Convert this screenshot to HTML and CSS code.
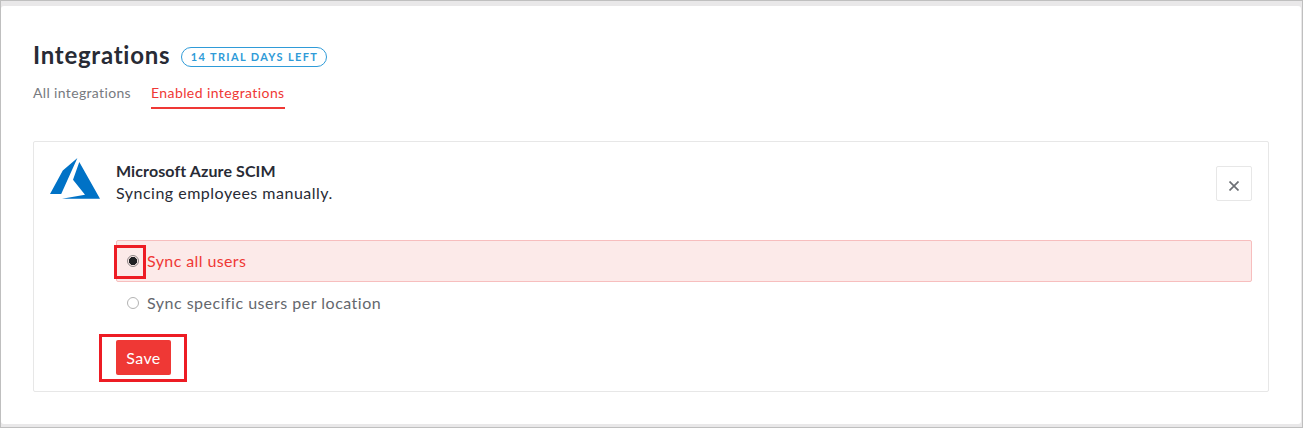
FILE: index.html
```html
<!DOCTYPE html>
<html lang="en">
<head>
<meta charset="utf-8">
<title>Integrations</title>
<link rel="stylesheet" href="styles.css">
</head>
<body>
<main class="panel">
  <header class="heading">
    <h1 class="title">Integrations</h1>
    <span class="trial">14 TRIAL DAYS LEFT</span>
  </header>
  <nav class="tabs">
    <a class="tab tab-all">All integrations</a>
    <a class="tab tab-active">Enabled integrations</a>
  </nav>
  <section class="card">
    <svg class="logo" width="50" height="42" viewBox="0 0 50 42"><path fill="#0072c6" d="M27.4 0 12.8 12.6 0 36h11.2zM29.3 4 23 21.7 35 36.8 12 40.8h38z"/></svg>
    <div class="content">
      <div class="top">
        <div class="intro">
          <h2 class="name">Microsoft Azure SCIM</h2>
          <p class="status">Syncing employees manually.</p>
        </div>
        <button class="close" aria-label="Close"><svg width="10" height="10" viewBox="0 0 10 10"><path d="M.5.5l9 9M9.5.5l-9 9" stroke="#6d7075" stroke-width="1.7"/></svg></button>
      </div>
      <label class="option selected"><span class="mark"><span class="radio checked"></span></span><span class="label-all">Sync all users</span></label>
      <label class="option"><span class="mark"><span class="radio"></span></span><span class="label-location">Sync specific users per location</span></label>
      <div class="actions"><button class="save">Save</button></div>
    </div>
  </section>
</main>
</body>
</html>
```
FILE: styles.css
```css
* { box-sizing: border-box; }
body {
  margin: 0;
  height: 428px;
  padding: 5px 1px 3px 0;
  border: 1px solid #bfbfbf;
  background: #e9e8e9;
  color: #282b35;
  font-family: Lato, sans-serif;
  overflow: hidden;
}
h1, h2, p { margin: 0; }
button { font: inherit; padding: 0; }
.panel { height: 418px; padding: 36px 32px 0; background: #fff; border-radius: 3px; }
.heading { display: flex; height: 26px; align-items: flex-start; }
.title { width: 148px; font-size: 24px; line-height: 26px; font-weight: 700; letter-spacing: .75px; white-space: nowrap; }
.trial {
  width: 146px;
  height: 20px;
  margin-top: 5px;
  padding-left: 1px;
  border: 1px solid #2f9bd8;
  border-radius: 10px;
  color: #2f9bd8;
  font-size: 11px;
  line-height: 18px;
  font-weight: 700;
  letter-spacing: 1.35px;
  text-align: center;
  white-space: nowrap;
}
.tabs { display: flex; gap: 20px; height: 41px; margin-top: 15px; }
.tab { height: 26px; font-size: 14px; line-height: 20px; color: #777a80; white-space: nowrap; }
.tab-all { width: 98px; letter-spacing: .35px; }
.tab-active { width: 134px; color: #ef3835; border-bottom: 2px solid #ef3835; letter-spacing: .41px; }
.card { display: flex; gap: 16px; width: 1236px; height: 251px; margin-top: 17px; padding: 16px; border: 1px solid #e7e7e7; border-radius: 2px; }
.logo { flex: none; }
.content { width: 1136px; padding-top: 8px; }
.top { display: flex; justify-content: space-between; height: 74px; }
.name { margin-top: -6px; font-size: 16px; line-height: 22px; font-weight: 700; letter-spacing: .1px; }
.status { font-size: 16px; line-height: 22px; letter-spacing: .5px; }
.close { display: flex; align-items: center; justify-content: center; width: 36px; height: 35px; padding-top: 4px; border: 1px solid #e7e7e7; border-radius: 2px; background: #fff; }
.option { display: flex; align-items: center; height: 42px; border: 1px solid transparent; border-radius: 2px; color: #64676d; font-size: 16px; }
.selected { border-color: #f7bebe; background: #fceae9; color: #ef3835; }
.mark { display: flex; align-items: center; justify-content: center; width: 32px; height: 34px; margin: 2px 1px 0 -3px; border: 3px solid transparent; }
.selected .mark { border-color: #ed1c24; }
.radio { width: 12px; height: 12px; margin: -2px 0 0 5px; border: 1px solid #b3b3b3; border-radius: 50%; background: #fff; }
.checked { border-color: #8d8585; background: radial-gradient(circle, #1f2023 0 3.8px, #fceae9 4.4px); }
.label-all, .label-location { margin-bottom: 2px; letter-spacing: .5px; white-space: nowrap; }
.label-all { letter-spacing: .4px; }
.actions { width: 88px; height: 48px; margin: 10px 0 0 -17px; padding: 3px 0 0 14px; border: 3px solid #ed1c24; }
.save { display: block; width: 55px; height: 35px; border: 0; border-radius: 2px; background: #ef3835; color: #fff; font-size: 16px; line-height: 36px; letter-spacing: .4px; }
```
